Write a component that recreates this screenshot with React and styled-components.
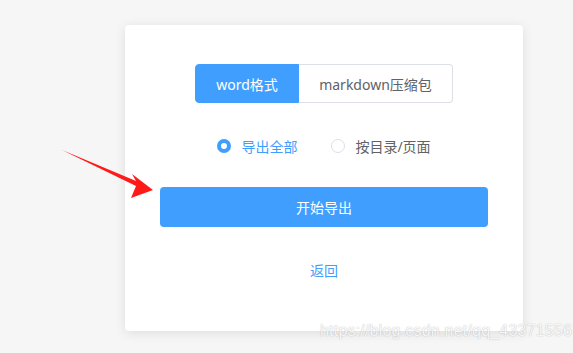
import { useState } from "react";
import styled, { createGlobalStyle } from "styled-components";

const GlobalStyle = createGlobalStyle`
  html, body {
    margin: 0;
    padding: 0;
    background: #f6f6f6;
    font-family: "Noto Sans", "Noto Sans CJK SC", sans-serif;
  }
`;

const Page = styled.div`
  position: relative;
  width: 573px;
  height: 353px;
  overflow: hidden;
  padding: 25px 0 0 125px;
  box-sizing: border-box;
`;

const Card = styled.div`
  width: 398px;
  height: 306px;
  background: #fff;
  border-radius: 4px;
  box-shadow: 0 2px 12px rgba(0, 0, 0, 0.1);
  display: flex;
  flex-direction: column;
  align-items: center;
  padding-top: 39px;
  box-sizing: border-box;
`;

const Tabs = styled.div`
  display: flex;
  height: 39px;
`;

const Tab = styled.button`
  width: ${(p) => p.w}px;
  height: 39px;
  font-family: inherit;
  font-size: 14px;
  border: 1px solid ${(p) => (p.active ? "#409eff" : "#dcdfe6")};
  background: ${(p) => (p.active ? "#409eff" : "#fff")};
  color: ${(p) => (p.active ? "#fff" : "#606266")};
  border-radius: ${(p) => (p.first ? "4px 0 0 4px" : "0 4px 4px 0")};
  border-left-width: ${(p) => (p.first ? 1 : 0)}px;
  padding: 0;
  cursor: pointer;
`;

const Radios = styled.div`
  display: flex;
  gap: 34px;
  margin-top: 34px;
  height: 18px;
  align-items: center;
`;

const RadioLabel = styled.label`
  display: flex;
  align-items: center;
  gap: 10px;
  font-size: 14px;
  color: ${(p) => (p.checked ? "#409eff" : "#606266")};
  cursor: pointer;
`;

const Dot = styled.span`
  width: 14px;
  height: 14px;
  border-radius: 50%;
  box-sizing: border-box;
  border: ${(p) => (p.checked ? "4px solid #409eff" : "1px solid #dcdfe6")};
  background: #fff;
`;

const Primary = styled.button`
  margin-top: 32px;
  width: 328px;
  height: 40px;
  border: none;
  border-radius: 4px;
  background: #409eff;
  color: #fff;
  font-family: inherit;
  font-size: 14px;
  cursor: pointer;
`;

const Back = styled.a`
  margin-top: 33px;
  font-size: 14px;
  color: #409eff;
  cursor: pointer;
`;

const Arrow = styled.svg`
  position: absolute;
  left: 0;
  top: 0;
`;

const Watermark = styled.div`
  position: absolute;
  left: 320px;
  top: 322px;
  font-family: "Liberation Sans", Arial, sans-serif;
  font-size: 16px;
  color: rgba(255, 255, 255, 0.9);
  text-shadow: 0 0 1px rgba(0, 0, 0, 0.22), 0 0 2px rgba(0, 0, 0, 0.1);
  letter-spacing: 0.2px;
`;

export default function App() {
  const [format, setFormat] = useState("word");
  const [scope, setScope] = useState("all");

  return (
    <>
      <GlobalStyle />
      <Page>
        <Card>
          <Tabs>
            <Tab first w={104} active={format === "word"} onClick={() => setFormat("word")}>
              word格式
            </Tab>
            <Tab w={154} active={format === "md"} onClick={() => setFormat("md")}>
              markdown压缩包
            </Tab>
          </Tabs>
          <Radios>
            <RadioLabel checked={scope === "all"} onClick={() => setScope("all")}>
              <Dot checked={scope === "all"} />
              导出全部
            </RadioLabel>
            <RadioLabel checked={scope === "dir"} onClick={() => setScope("dir")}>
              <Dot checked={scope === "dir"} />
              按目录/页面
            </RadioLabel>
          </Radios>
          <Primary>开始导出</Primary>
          <Back>返回</Back>
        </Card>
        <Arrow width="573" height="353">
          <polygon
            points="62,150 136,181 132,174 153,190 131,198 136,186"
            fill="#ff1a1a"
          />
        </Arrow>
        <Watermark>https://blog.csdn.net/qq_43371556</Watermark>
      </Page>
    </>
  );
}
